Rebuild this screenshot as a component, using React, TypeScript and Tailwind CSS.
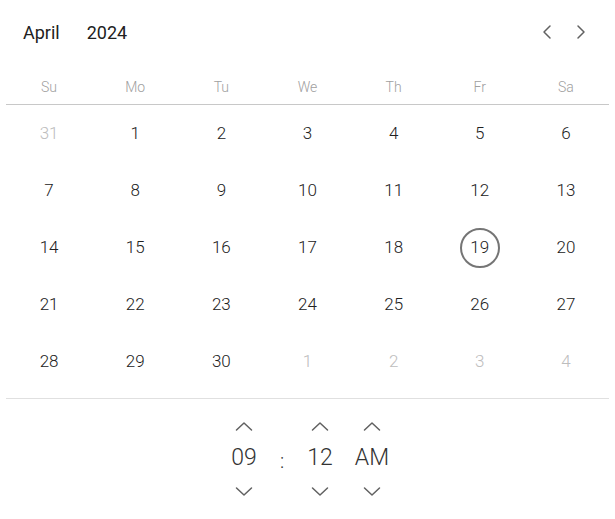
import React from 'react';

const days = ['Su', 'Mo', 'Tu', 'We', 'Th', 'Fr', 'Sa'];

const cells: { n: number; out?: boolean }[] = [
    { n: 31, out: true },
    ...Array.from({ length: 30 }, (_, i) => ({ n: i + 1 })),
    { n: 1, out: true },
    { n: 2, out: true },
    { n: 3, out: true },
    { n: 4, out: true },
];

const Chevron = ({ dir }: { dir: 'left' | 'right' | 'up' | 'down' }) => {
    const paths = {
        left: 'M10 3 L4 9 L10 15',
        right: 'M4 3 L10 9 L4 15',
        up: 'M1.5 12 L9 5 L16.5 12',
        down: 'M1.5 6 L9 13 L16.5 6',
    };
    const isH = dir === 'left' || dir === 'right';
    return (
        <svg width={isH ? 14 : 18} height={18} viewBox={isH ? '0 0 14 18' : '0 0 18 18'} fill="none">
            <path d={paths[dir]} stroke="#616161" strokeWidth="1.5" strokeLinecap="round" strokeLinejoin="round" />
        </svg>
    );
};

const TimeCol = ({ value, className }: { value: string; className?: string }) => (
    <div className={`flex flex-col items-center w-[40px] ${className ?? ''}`}>
        <Chevron dir="up" />
        <span className="leading-[44px]">{value}</span>
        <div className="mt-[2px]">
            <Chevron dir="down" />
        </div>
    </div>
);

const App: React.FC = () => {
    return (
        <div className="w-[615px] h-[519px] bg-white px-[6px] font-['Roboto',sans-serif] text-[#212121]">
            {/* header */}
            <div className="h-[64px] flex items-center justify-between pl-[17px] pr-[21px]">
                <div className="flex items-center gap-[27px] text-[18px]">
                    <span>April</span>
                    <span>2024</span>
                </div>
                <div className="flex items-center gap-[20px]">
                    <Chevron dir="left" />
                    <Chevron dir="right" />
                </div>
            </div>

            {/* weekday names */}
            <div className="grid grid-cols-7 h-[41px] items-end border-b border-[#c8c8c8] pb-[7px]">
                {days.map((d) => (
                    <div key={d} className="text-center text-[14px] leading-[20px] font-light text-[#a0a0a0]">{d}</div>
                ))}
            </div>

            {/* dates */}
            <div className="grid grid-cols-7 pb-[8px] border-b border-[#e0e0e0]">
                {cells.map((c, i) => (
                    <div key={i} className="h-[57px] flex items-center justify-center text-[17px] font-light">
                        {c.n === 19 && !c.out ? (
                            <span className="w-[40px] h-[40px] rounded-full border-2 border-[#757575] flex items-center justify-center text-[#212121]">
                                19
                            </span>
                        ) : (
                            <span className={c.out ? 'text-[#bdbdbd]' : 'text-[#212121]'}>{c.n}</span>
                        )}
                    </div>
                ))}
            </div>

            {/* time */}
            <div className="flex pt-[19px] pl-[218px] text-[23px] font-light text-[#333333]">
                <TimeCol value="09" />
                <div className="w-[36px] flex items-center justify-center text-[20px] mt-[4px]">:</div>
                <TimeCol value="12" />
                <TimeCol value="AM" className="ml-[12px]" />
            </div>
        </div>
    );
};

export default App;
